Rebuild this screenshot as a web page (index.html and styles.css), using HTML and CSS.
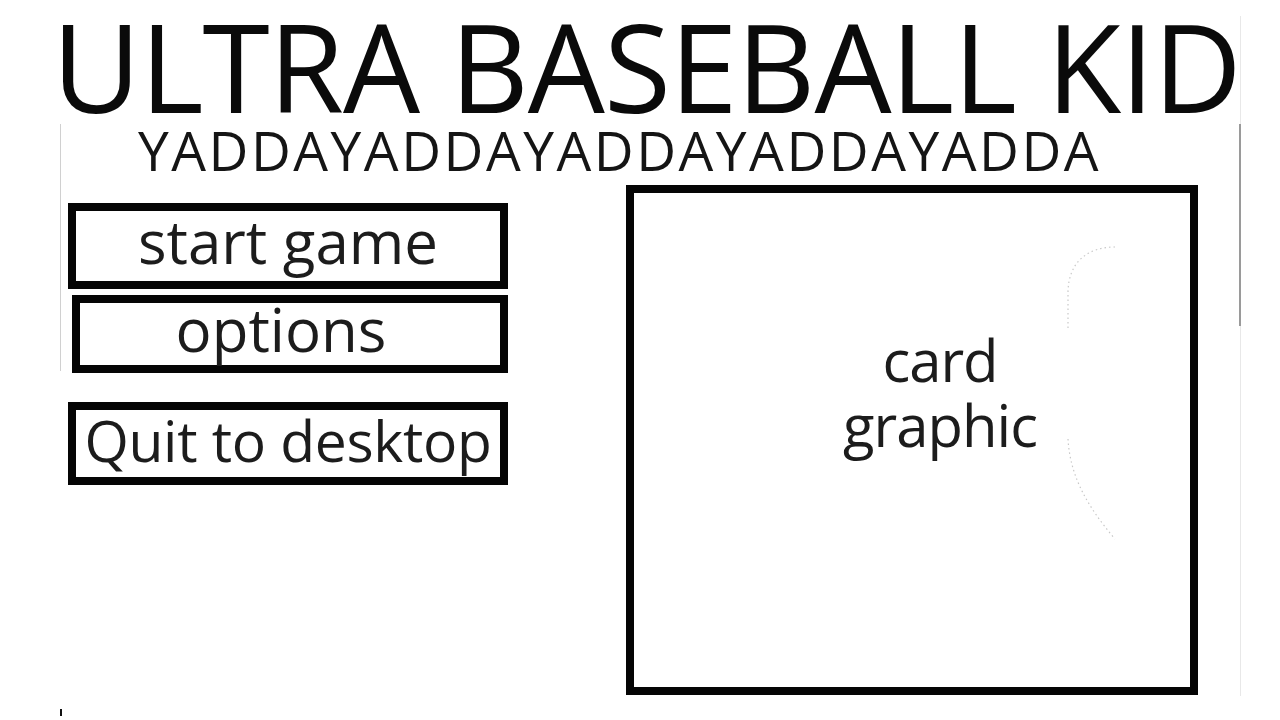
FILE: index.html
```html
<!DOCTYPE html>
<html lang="en">
<head>
<meta charset="utf-8">
<title>Ultra Baseball Kid</title>
<link rel="stylesheet" href="styles.css">
</head>
<body>
<div class="page">
  <h1 class="title">ULTRA BASEBALL KID</h1>
  <div class="sheet">
    <div class="subtitle">YADDAYADDAYADDAYADDAYADDA</div>
    <div class="content">
      <nav class="menu">
        <button class="btn btn-start">start game</button>
        <button class="btn btn-options">options</button>
        <button class="btn btn-quit">Quit to desktop</button>
      </nav>
      <div class="card">
        <svg class="card-sketch" width="120" height="320" viewBox="0 0 120 320">
          <path d="M81 4 C55 4 34 18 34 50 L34 86" fill="none" stroke="#c8c8c8" stroke-width="1.2" stroke-dasharray="1.5 3"/>
          <path d="M34 196 C36 232 52 262 81 296" fill="none" stroke="#c8c8c8" stroke-width="1.2" stroke-dasharray="1.5 3"/>
        </svg>
        <div class="card-label">card<br>graphic</div>
      </div>
    </div>
  </div>
  <span class="tick"></span>
</div>
</body>
</html>
```

FILE: styles.css
```css
html, body {
  margin: 0;
  padding: 0;
  background: #ffffff;
}

body {
  width: 1280px;
  height: 720px;
  overflow: hidden;
  font-family: "Open Sans", "Noto Sans", sans-serif;
  font-weight: 500;
  color: #111;
}

.page {
  position: relative;
  box-sizing: border-box;
  width: 1181px;
  height: 680px;
  margin: 20px 0 0 60px;
  border-right: 1px solid #e8e8e8;
}

.page::before {
  content: "";
  position: absolute;
  left: 0;
  top: 108px;
  width: 1px;
  height: 247px;
  background: #d0d0d0;
}

.page::after {
  content: "";
  position: absolute;
  right: -1px;
  top: 108px;
  width: 2px;
  height: 202px;
  background: #9a9a9a;
}

.tick {
  position: absolute;
  left: 0;
  top: 693px;
  width: 2px;
  height: 7px;
  background: #111;
}

.title {
  margin: -4px 0 0 -8px;
  font-size: 122px;
  font-weight: 500;
  line-height: 100px;
  letter-spacing: -1px;
  white-space: nowrap;
  color: #0a0a0a;
}

.sheet {
  margin-top: 6px;
}

.subtitle {
  padding-left: 78px;
  font-size: 55px;
  line-height: 55px;
  letter-spacing: 2.5px;
  color: #151515;
  white-space: nowrap;
}

.content {
  display: flex;
  align-items: flex-start;
  margin-top: 8px;
}

.menu {
  display: flex;
  flex-direction: column;
  align-items: flex-start;
  margin: 18px 0 0 8px;
  width: 440px;
}

.btn {
  display: flex;
  align-items: center;
  justify-content: center;
  box-sizing: border-box;
  width: 440px;
  margin: 0;
  padding: 0 0 10px;
  border: 8px solid #050505;
  background: #fff;
  font-family: inherit;
  font-weight: 500;
  font-size: 60px;
  line-height: 60px;
  color: #1c1c1c;
  letter-spacing: 0;
  white-space: nowrap;
}

.btn-start {
  height: 86px;
}

.btn-options {
  height: 78px;
  width: 436px;
  margin: 6px 0 0 4px;
  padding-right: 18px;
}

.btn-quit {
  height: 83px;
  margin-top: 29px;
  font-size: 57px;
  letter-spacing: -0.3px;
  padding-bottom: 8px;
}

.card {
  position: relative;
  box-sizing: border-box;
  width: 572px;
  height: 510px;
  margin-left: 118px;
  border: 8px solid #050505;
  padding: 134px 0 0 56px;
  text-align: center;
}

.card-sketch {
  position: absolute;
  left: 400px;
  top: 50px;
}

.card-label {
  font-size: 58px;
  line-height: 65px;
  color: #1c1c1c;
  letter-spacing: -1px;
}
```
